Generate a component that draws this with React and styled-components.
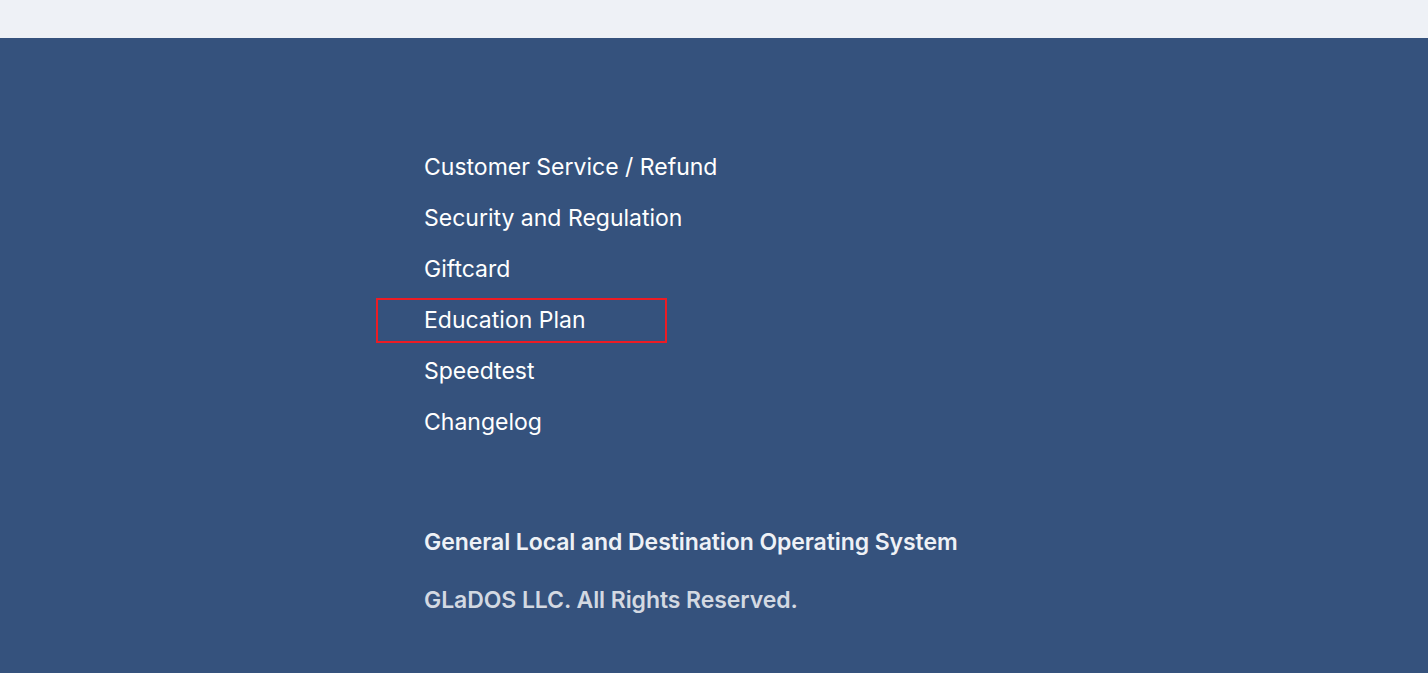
import React from "react";
import styled, { createGlobalStyle } from "styled-components";

const Global = createGlobalStyle`
  html, body { margin: 0; padding: 0; background: #35527d; }
  body { font-family: Inter, "Noto Sans", sans-serif; -webkit-font-smoothing: antialiased; }
  * { box-sizing: border-box; }
`;

const TopBar = styled.div`
  height: 38px;
  background: #eef1f6;
`;

const Footer = styled.footer`
  background: #35527d;
  min-height: 635px;
  padding: 103px 0 40px 424px;
  display: flex;
  flex-direction: column;
`;

const LinkList = styled.ul`
  list-style: none;
  margin: 0;
  padding: 0;
  display: flex;
  flex-direction: column;
`;

const Item = styled.li`
  position: relative;
  height: 51px;
  display: flex;
  align-items: center;
`;

const Link = styled.a`
  color: #ffffff;
  font-size: 23px;
  font-weight: 400;
  text-decoration: none;
`;

const Highlight = styled.span`
  position: absolute;
  left: -48px;
  top: 4px;
  width: 291px;
  height: 45px;
  border: 2px solid #ed1c24;
  pointer-events: none;
`;

const Brand = styled.div`
  margin-top: 80px;
  display: flex;
  flex-direction: column;
  gap: 28px;
`;

const Line = styled.div`
  line-height: 30px;
  font-size: 23px;
  font-weight: 600;
  letter-spacing: -0.08px;
  color: ${(p) => (p.$muted ? "#d3d9e2" : "#eef1f6")};
`;

const links = [
  "Customer Service / Refund",
  "Security and Regulation",
  "Giftcard",
  "Education Plan",
  "Speedtest",
  "Changelog",
];

export default function App() {
  return (
    <>
      <Global />
      <TopBar />
      <Footer>
        <LinkList>
          {links.map((l) => (
            <Item key={l}>
              {l === "Education Plan" && <Highlight />}
              <Link href="#">{l}</Link>
            </Item>
          ))}
        </LinkList>
        <Brand>
          <Line>General Local and Destination Operating System</Line>
          <Line $muted>GLaDOS LLC. All Rights Reserved.</Line>
        </Brand>
      </Footer>
    </>
  );
}
